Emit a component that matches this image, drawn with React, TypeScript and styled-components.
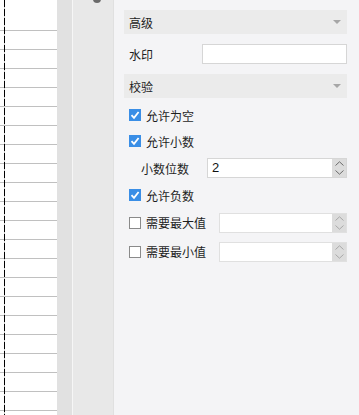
import React from 'react';
import styled, { createGlobalStyle, css } from 'styled-components';

const Global = createGlobalStyle`
  html, body {
    margin: 0;
    padding: 0;
    background: #f4f4f6;
  }
  body {
    font-family: "Noto Sans CJK SC", "Liberation Sans", sans-serif;
    font-size: 12px;
    color: #1e1e1e;
  }
`;

const Page = styled.div`
  display: flex;
  height: 415px;
  width: 359px;
  overflow: hidden;
`;

const Sheet = styled.div`
  position: relative;
  box-sizing: border-box;
  width: 57px;
  flex-shrink: 0;
  padding-top: 12px;
  background-image: repeating-linear-gradient(
      to bottom,
      transparent 0,
      transparent 18px,
      #c0c0c0 18px,
      #c0c0c0 19px
    ),
    linear-gradient(#fff, #fff);
  background-origin: content-box, border-box;
  background-clip: content-box, border-box;

  &::before {
    content: '';
    position: absolute;
    left: 4px;
    top: 0;
    bottom: 0;
    width: 1px;
    background: repeating-linear-gradient(
      to bottom,
      #000 0,
      #000 7px,
      #c8c8c8 7px,
      #c8c8c8 9px
    );
  }
`;

const Gutter = styled.div`
  width: 15px;
  flex-shrink: 0;
  background: #e1e1e1;
  border-right: 1px solid #f6f6f6;
`;

const Rail = styled.div`
  position: relative;
  width: 40px;
  flex-shrink: 0;
  background: #e8e8e8;
  border-right: 1px solid #e0e0e0;
`;

const Knob = styled.span`
  position: absolute;
  left: 20px;
  top: -5px;
  width: 8px;
  height: 8px;
  border-radius: 50%;
  background: #6a6a6a;
`;

const Panel = styled.div`
  flex: 1;
  display: flex;
  flex-direction: column;
  padding: 10px 12px 0 10px;
  background: #f4f4f6;
`;

const Header = styled.div`
  display: flex;
  align-items: center;
  justify-content: space-between;
  height: 24px;
  padding: 0 6px 0 5px;
  background: #ebebeb;
`;

const Caret = styled.span`
  width: 0;
  height: 0;
  border-left: 4px solid transparent;
  border-right: 4px solid transparent;
  border-top: 4px solid #a6a6a6;
`;

const Row = styled.div<{ $h: number; $indent?: number }>`
  display: flex;
  align-items: center;
  height: ${({ $h }) => $h}px;
  padding-left: ${({ $indent = 5 }) => $indent}px;
`;

const Gap = styled.div`
  height: 4px;
`;

const Label = styled.span<{ $w?: number }>`
  flex-shrink: 0;
  ${({ $w }) =>
    $w &&
    css`
      width: ${$w}px;
    `};
`;

const Box = styled.span<{ $on?: boolean }>`
  box-sizing: border-box;
  width: 12px;
  height: 12px;
  flex-shrink: 0;
  margin-right: 5px;
  display: flex;
  align-items: center;
  justify-content: center;
  ${({ $on }) =>
    $on
      ? css`
          background: #3a8ee6;
        `
      : css`
          background: #fff;
          border: 1px solid #8a8a8a;
        `};
`;

const CheckCell = styled.div<{ $w?: number }>`
  display: flex;
  align-items: center;
  flex-shrink: 0;
  ${({ $w }) =>
    $w &&
    css`
      width: ${$w}px;
    `};
`;

const Field = styled.div<{ $disabled?: boolean }>`
  box-sizing: border-box;
  flex: 1;
  display: flex;
  height: 20px;
  background: #fff;
  border: 1px solid ${({ $disabled }) => ($disabled ? '#e0e0e0' : '#d6d6d6')};
`;

const Value = styled.span`
  flex: 1;
  padding-left: 4px;
  line-height: 18px;
  font-family: "Liberation Sans", sans-serif;
  font-size: 13px;
  color: #111;
`;

const Spin = styled.div<{ $disabled?: boolean }>`
  width: 14px;
  display: flex;
  flex-direction: column;
  align-items: center;
  justify-content: space-around;
  background: #dcdcdc;
  color: ${({ $disabled }) => ($disabled ? '#a8a8a8' : '#6a6a6a')};
`;

const Check = () => (
  <svg width="10" height="10" viewBox="0 0 10 10">
    <path d="M1.5 5.2 L4 7.8 L8.6 2" fill="none" stroke="#fff" strokeWidth="1.8" />
  </svg>
);

const Chevron = ({ up }: { up?: boolean }) => (
  <svg width="9" height="5" viewBox="0 0 9 5">
    <path
      d={up ? 'M0.5 4.5 L4.5 0.8 L8.5 4.5' : 'M0.5 0.5 L4.5 4.2 L8.5 0.5'}
      fill="none"
      stroke="currentColor"
      strokeWidth="1"
    />
  </svg>
);

const Spinner = ({ value, disabled }: { value?: string; disabled?: boolean }) => (
  <Field $disabled={disabled}>
    <Value>{value}</Value>
    <Spin $disabled={disabled}>
      <Chevron up />
      <Chevron />
    </Spin>
  </Field>
);

const CheckRow = ({ on, label, h = 26 }: { on?: boolean; label: string; h?: number }) => (
  <Row $h={h}>
    <CheckCell>
      <Box $on={on}>{on && <Check />}</Box>
      <Label>{label}</Label>
    </CheckCell>
  </Row>
);

export default function App() {
  return (
    <Page>
      <Global />
      <Sheet />
      <Gutter />
      <Rail>
        <Knob />
      </Rail>
      <Panel>
        <Header>
          <span>高级</span>
          <Caret />
        </Header>
        <Row $h={40}>
          <Label $w={73}>水印</Label>
          <Field />
        </Row>
        <Header>
          <span>校验</span>
          <Caret />
        </Header>
        <Gap />
        <CheckRow on label="允许为空" />
        <CheckRow on label="允许小数" />
        <Row $h={28} $indent={17}>
          <Label $w={66}>小数位数</Label>
          <Spinner value="2" />
        </Row>
        <CheckRow on label="允许负数" />
        <Row $h={29}>
          <CheckCell $w={90}>
            <Box />
            <Label>需要最大值</Label>
          </CheckCell>
          <Spinner disabled />
        </Row>
        <Row $h={29}>
          <CheckCell $w={90}>
            <Box />
            <Label>需要最小值</Label>
          </CheckCell>
          <Spinner disabled />
        </Row>
      </Panel>
    </Page>
  );
}
